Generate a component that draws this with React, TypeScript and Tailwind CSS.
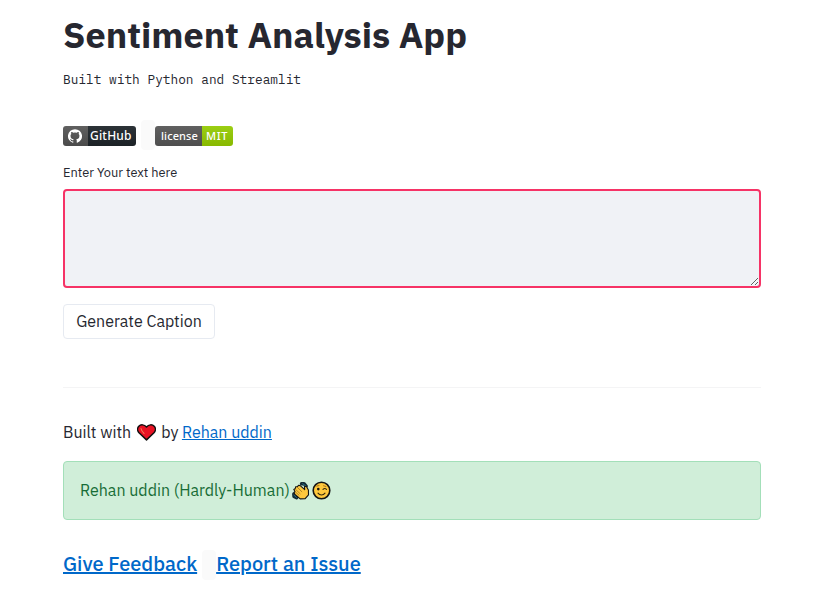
import type { ReactNode } from 'react';

function GitHubMark() {
  return (
    <svg viewBox="0 0 24 24" className="mr-px h-[14px] w-[14px]" fill="#fff" aria-hidden="true">
      <path d="M12 .3a12 12 0 0 0-3.8 23.4c.6.1.8-.3.8-.6v-2c-3.3.7-4-1.6-4-1.6-.6-1.4-1.4-1.8-1.4-1.8-1-.7.1-.7.1-.7 1.2 0 1.9 1.2 1.9 1.2 1 1.8 2.8 1.3 3.5 1 0-.8.4-1.3.7-1.6-2.7-.3-5.5-1.3-5.5-6 0-1.2.5-2.3 1.3-3.1-.2-.4-.6-1.6 0-3.2 0 0 1-.3 3.4 1.2a11.5 11.5 0 0 1 6 0c2.3-1.5 3.3-1.2 3.3-1.2.6 1.6.2 2.8 0 3.2.9.8 1.3 1.9 1.3 3.2 0 4.6-2.8 5.6-5.5 5.9.5.4.9 1 .9 2.2v3.3c0 .3.1.7.8.6A12 12 0 0 0 12 .3" />
    </svg>
  );
}

function Heart() {
  return (
    <svg viewBox="0 0 19 17" className="ml-[6px] h-[17px] w-[19px] shrink-0" aria-hidden="true">
      <path d="M9.5 15.9 2 8.7C.2 6.7.2 3.9 1.8 2.2 3.8.2 7.2.4 9.5 3c2.3-2.6 5.7-2.8 7.7-.8 1.6 1.7 1.6 4.5-.2 6.5Z" fill="#e81224" stroke="#101010" strokeWidth="1.5" strokeLinejoin="round" />
      <path d="M4 4.5C4.4 6.6 5.5 7.9 7 9.3" fill="none" stroke="#f47a55" strokeWidth="1.1" strokeLinecap="round" />
    </svg>
  );
}

function Clap() {
  return (
    <svg viewBox="0 0 18 18" className="ml-[2px] h-[18px] w-[18px] shrink-0" aria-hidden="true">
      <g fill="none" stroke="#152b35" strokeLinecap="round" strokeLinejoin="round">
        <path d="M9.5 1.8 12 1.7 14.1 4.2M1.8 12 2 14.5 4.6 15.8" strokeWidth="3.4" />
        <path d="M10.7 1.7 13.8 4M2 13.2 4.5 15.4" stroke="#24718a" strokeWidth="1" />
      </g>
      <path d="M3 12.5 2 10.5 3 9.5 1.8 7.5 3.3 6.5 3.6 4.8 5.5 4.6 6.5 3.2 8.2 3.6 12.7 7.6 12.5 4.6 14.3 4.2 16.4 8 16.5 12.8 13.2 16.7 8.2 16.9Z" fill="#ffc83d" stroke="#171717" strokeWidth="1.1" strokeLinejoin="round" />
      <path d="m5.5 5.5 4.3 4.2M3.7 7.5l4.4 4.2M3.5 10l3.5 3.2" fill="none" stroke="#8e651d" strokeWidth=".7" strokeLinecap="round" />
    </svg>
  );
}

function Wink() {
  return (
    <svg viewBox="0 0 19 19" className="ml-[2px] h-[19px] w-[19px] shrink-0" aria-hidden="true">
      <circle cx="9.5" cy="9.5" r="8.3" fill="#ffc83d" stroke="#141414" strokeWidth="1.6" />
      <circle cx="6.3" cy="8.1" r="1.3" fill="#141414" />
      <g fill="none" stroke="#35270c" strokeWidth="1.1" strokeLinecap="round">
        <path d="M11 8.4c1-1 2.5-1 3.5 0M6 12.2c1.8 2.4 5.2 2.4 7 0" />
        <path d="M4.7 5.1 7 4.4M11.5 4.8l2.3.8" stroke="#b57e1b" />
      </g>
    </svg>
  );
}

function Link({ children, className }: { children: ReactNode; className: string }) {
  return (
    <a href="#" className={`text-[#0068c9] underline ${className}`}>
      {children}
    </a>
  );
}

export default function App() {
  return (
    <main className="h-[614px] overflow-hidden bg-white pl-[63px] pr-[68px] font-['IBM_Plex_Sans',Roboto,sans-serif] text-[#262730]">
      <h1 className="pt-[13px] text-[36px] font-bold leading-[44px] whitespace-nowrap">Sentiment Analysis App</h1>
      <p className="mt-[13px] h-5 font-['IBM_Plex_Mono','Liberation_Mono',monospace] text-[12.8px] leading-5 whitespace-nowrap">Built with Python and Streamlit</p>

      <div className="mt-[30px] flex h-[30px] items-center">
        <div className="mt-[2px] flex h-5 w-[73px] overflow-hidden rounded-[3px] text-white">
          <span className="flex w-[25px] items-center justify-center bg-linear-to-b from-[#606060] to-[#4b4b4b]"><GitHubMark /></span>
          <span className="flex-1 bg-linear-to-b from-[#2c3237] to-[#1c2226] pl-[2px] font-['Noto_Sans',sans-serif] text-[12px] font-medium leading-[19px] tracking-[0.2px]">GitHub</span>
        </div>
        <div className="ml-[5px] h-[30px] w-[14px] rounded-[4px] bg-[#fafafa]" />
        <div className="mt-[2px] flex h-5 w-[78px] overflow-hidden rounded-[3px] font-['Noto_Sans',sans-serif] text-[11px] font-medium leading-5 text-white">
          <span className="w-[47px] bg-linear-to-b from-[#606060] to-[#4e4e4e] pl-[6px] tracking-[0.1px]">license</span>
          <span className="flex-1 bg-linear-to-b from-[#9bce13] to-[#88b900] pl-1 tracking-[0.6px]">MIT</span>
        </div>
      </div>

      <label htmlFor="entry" className="mt-[13px] block h-[19px] text-[12.8px] leading-[19px] whitespace-nowrap">Enter Your text here</label>
      <textarea id="entry" className="mt-[7px] block h-[99px] w-[698px] resize-y rounded-[4px] border-2 border-[#f63366] bg-[#f0f2f6] p-3 outline-none" />
      <button className="mt-4 block h-[35px] w-[152px] rounded-[4px] border border-[#e6eaf1] text-center text-[16px] leading-[33px] whitespace-nowrap">Generate Caption</button>

      <hr className="mt-12 border-[#f4f4f5]" />
      <p className="mt-8 flex h-6 items-center text-[16px] leading-6 whitespace-nowrap">
        <span>Built with</span>
        <Heart />
        <span className="ml-[5px]">by</span>
        <Link className="ml-[3.5px]">Rehan uddin</Link>
      </p>

      <div className="mt-[17px] flex h-[59px] items-center rounded-[4px] border border-[#a3dfb9] bg-[#d0eed9] pl-4 text-[16px] whitespace-nowrap text-[#176c36]">
        <span className="pb-[2px]">Rehan uddin (Hardly-Human)</span>
        <Clap />
        <Wink />
      </div>

      <h3 className="mt-[30px] flex h-[30px] items-center text-[20px] font-medium leading-[30px] whitespace-nowrap">
        <Link className="mr-[5px] pb-[2px]">Give Feedback</Link>
        <span className="h-[30px] w-[14px] rounded-[4px] bg-[#fafafa]" />
        <Link className="pb-[2px]">Report an Issue</Link>
      </h3>
    </main>
  );
}
